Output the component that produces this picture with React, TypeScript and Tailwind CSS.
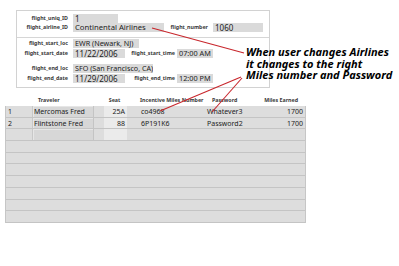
import React from 'react';

const label = "text-[5.3px] font-bold text-[#3a3a3a] text-right leading-none whitespace-nowrap";
const field = "h-full bg-[#dadada] text-[#222] flex items-center pl-[2px] leading-none whitespace-nowrap overflow-hidden";

const cols = "grid grid-cols-[27px_61px_10px_23px_12px_66px_56px_46px]";

const travelers = [
  { n: '1', name: 'Mercomas Fred', seat: '25A', miles: 'co4968', pass: 'Whatever3', earned: '1700' },
  { n: '2', name: 'Flintstone Fred', seat: '88', miles: '6P191K6', pass: 'Password2', earned: '1700' },
  { n: '', name: '', seat: '', miles: '', pass: '', earned: '' },
];

function FlightPanel() {
  return (
    <div className="w-[254px] h-[78px] border border-[#d2d2d2] flex flex-col">
      {/* id rows */}
      <div className="flex items-center h-[9px] mt-[3px]">
        <div className={`${label} w-[51px]`}>flight_uniq_ID</div>
        <div className={`${field} ml-[5px] w-[45px] text-[8px]`}>1</div>
      </div>
      <div className="flex items-center h-[9px]">
        <div className={`${label} w-[51px]`}>flight_airline_ID</div>
        <div className={`${field} ml-[5px] w-[91px] text-[7.7px]`}>Continental Airlines</div>
        <div className={`${label} w-[44px]`}>flight_number</div>
        <div className={`${field} ml-[5px] w-[50px] text-[8px]`}>1060</div>
      </div>
      <div className="h-px bg-[#d6d6d6] mt-[5px]" />

      {/* departure */}
      <div className="flex items-center h-[9px] mt-[1px]">
        <div className={`${label} w-[51px]`}>flight_start_loc</div>
        <div className={`${field} ml-[5px] w-[66px] text-[7.2px]`}>EWR (Newark, NJ)</div>
      </div>
      <div className="flex items-center h-[9px] mt-[1px]">
        <div className={`${label} w-[51px]`}>flight_start_date</div>
        <div className={`${field} ml-[5px] w-[52px] text-[8px]`}>11/22/2006</div>
        <div className={`${label} w-[50px]`}>flight_start_time</div>
        <div className={`${field} ml-[2px] w-[36px] text-[7.3px]`}>07:00 AM</div>
      </div>

      {/* arrival */}
      <div className="flex items-center h-[9px] mt-[6px]">
        <div className={`${label} w-[51px]`}>flight_end_loc</div>
        <div className={`${field} ml-[5px] w-[80px] text-[7.2px]`}>SFO (San Francisco, CA)</div>
      </div>
      <div className="flex items-center h-[9px] mt-[1px]">
        <div className={`${label} w-[51px]`}>flight_end_date</div>
        <div className={`${field} ml-[5px] w-[52px] text-[8px]`}>11/29/2006</div>
        <div className={`${label} w-[50px]`}>flight_end_time</div>
        <div className={`${field} ml-[2px] w-[36px] text-[7.3px]`}>12:00 PM</div>
      </div>
    </div>
  );
}

function TravelerTable() {
  return (
    <div className="ml-[5px] w-[301px]">
      <div className={`${cols} h-[8px] mt-[9px] items-center text-[5.3px] font-bold text-[#3a3a3a] leading-none`}>
        <div />
        <div className="pl-[6px]">Traveler</div>
        <div />
        <div className="text-center">Seat</div>
        <div />
        <div className="pl-[2px] whitespace-nowrap">Incentive Miles Number</div>
        <div className="pl-[8px]">Password</div>
        <div className="text-right pr-[8px] whitespace-nowrap">Miles Earned</div>
      </div>
      <div className="mt-[1px] bg-[#dddddd] border-x border-[#c6c6c6]">
        {travelers.map((t, i) => (
          <div key={i} className={`${cols} h-[11.7px] border-b border-[#c4c4c4] text-[7px] text-[#222] leading-none`}>
            <div className="flex items-center pl-[2px] border-r border-[#c8c8c8]">{t.n}</div>
            <div className="flex items-center pl-[1px] bg-[#d7d7d7] border-r border-[#c4c4c4] shadow-[inset_1px_1px_0_#e6e6e6]">{t.name}</div>
            <div />
            <div className="flex items-center justify-end pr-[2px] bg-[#ebebeb]">{t.seat}</div>
            <div />
            <div className="flex items-center pl-[2px]">{t.miles}</div>
            <div className="flex items-center pl-[2px]">{t.pass}</div>
            <div className="flex items-center justify-end pr-[4px]">{t.earned}</div>
          </div>
        ))}
        {Array.from({ length: 7 }).map((_, i) => (
          <div key={i} className="h-[11.7px] border-b border-[#c4c4c4]" />
        ))}
      </div>
    </div>
  );
}

export default function App() {
  return (
    <div className="w-[399px] h-[266px] bg-white relative overflow-hidden font-['Noto_Sans',sans-serif]">
      <div className="pt-[10px] pl-[16px]">
        <FlightPanel />
      </div>
      <TravelerTable />

      {/* callout */}
      <div className="absolute left-[246px] top-[46px] text-[11px] leading-[11.5px] font-bold italic text-black whitespace-nowrap">
        <div>When user changes Airlines</div>
        <div>it changes to the right</div>
        <div>Miles number and Password</div>
      </div>
      <svg className="absolute inset-0 pointer-events-none" width="399" height="266">
        <line x1="152" y1="28" x2="244" y2="53" stroke="#c8262c" strokeWidth="1.1" />
        <line x1="241" y1="77" x2="160" y2="111" stroke="#c8262c" strokeWidth="1.1" />
        <line x1="242" y1="78" x2="212" y2="112" stroke="#c8262c" strokeWidth="1.1" />
      </svg>
    </div>
  );
}
